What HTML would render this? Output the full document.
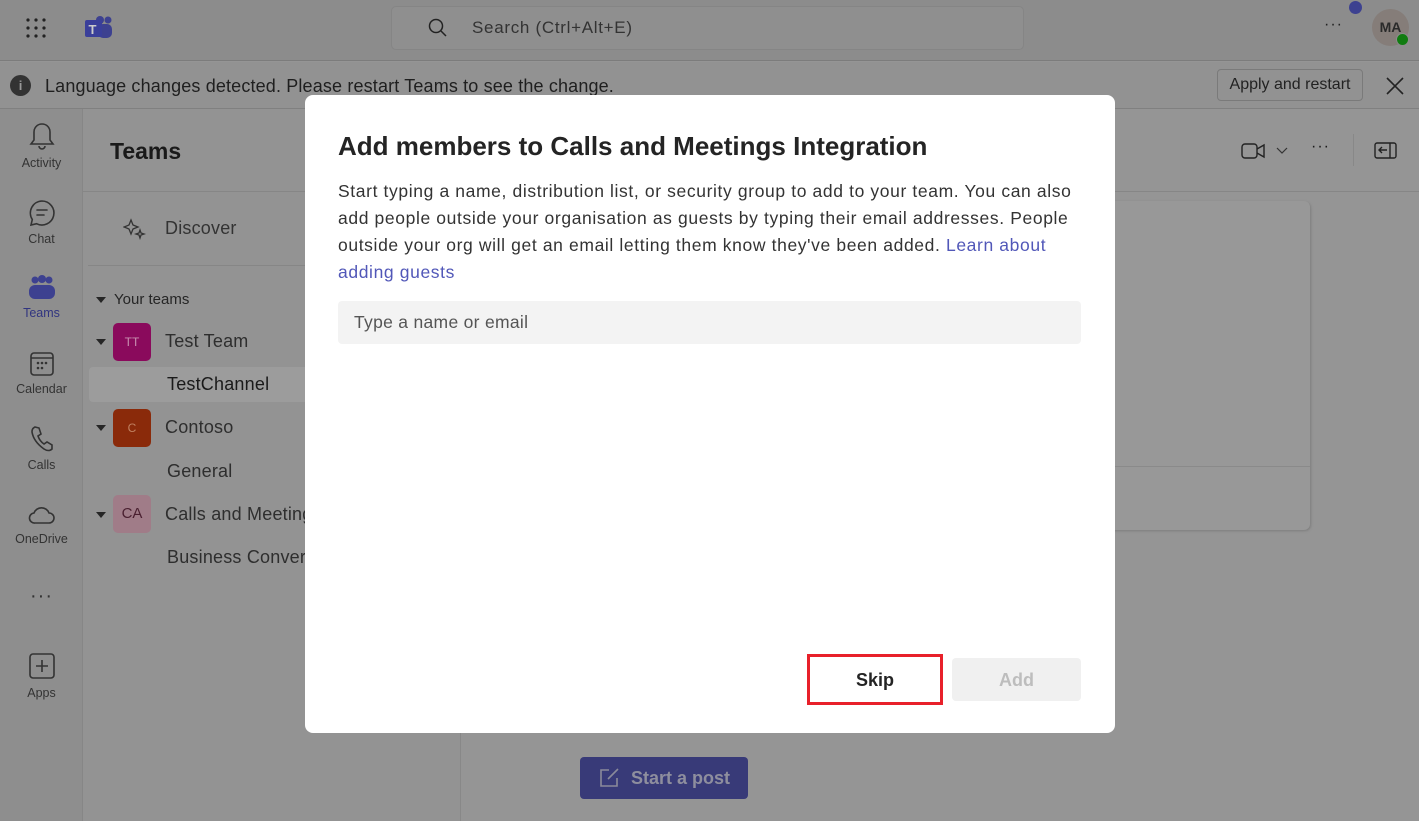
<!DOCTYPE html>
<html><head><meta charset="utf-8"><style>
*{box-sizing:border-box;margin:0;padding:0}
body{width:1419px;height:821px;overflow:hidden;position:relative;background:#959595;font-family:"Segoe UI","Liberation Sans",sans-serif;color:#1a1a1a}
.abs{position:absolute}
.top{left:0;top:0;width:1419px;height:61px;background:#8c8c8c;border-bottom:1px solid #7c7c7c}
.ban{left:0;top:62px;width:1419px;height:47px;background:#929292;border-bottom:1px solid #808080}
.rail{left:0;top:109px;width:83px;height:712px;background:#8e8e8e;border-right:1px solid #868686}
.panel{left:83px;top:109px;width:378px;height:712px;background:#939393;border-right:1px solid #888}
.ri{position:absolute;left:0;width:83px;text-align:center;font-size:12.5px;color:#333}
.ri svg{display:block;margin:0 auto 4px}
.tl{position:absolute;font-size:18px;color:#2e2e2e;letter-spacing:0.2px}
.av{position:absolute;left:113px;width:38px;height:38px;border-radius:5px;font-size:12px;text-align:center;line-height:38px}
.tri{position:absolute;left:96px;width:0;height:0;border-left:5px solid transparent;border-right:5px solid transparent;border-top:6px solid #262626}
.modal{left:305px;top:95px;width:810px;height:638px;background:#fff;border-radius:8px}
</style></head><body>
<div class="abs top"></div>
<svg class="abs" style="left:25px;top:17px" width="24" height="24"><g fill="#222"><circle cx="3" cy="3" r="1.6"/><circle cx="11" cy="3" r="1.6"/><circle cx="19" cy="3" r="1.6"/><circle cx="3" cy="11" r="1.6"/><circle cx="11" cy="11" r="1.6"/><circle cx="19" cy="11" r="1.6"/><circle cx="3" cy="19" r="1.6"/><circle cx="11" cy="19" r="1.6"/><circle cx="19" cy="19" r="1.6"/></g></svg>
<svg class="abs" style="left:84px;top:15px" width="30" height="26"><circle cx="24" cy="5" r="3.5" fill="#3d4190"/><rect x="14" y="9" width="14" height="14" rx="5" fill="#3d4190"/><circle cx="16" cy="5" r="4" fill="#3d4190"/><rect x="1" y="5" width="17" height="17" rx="2" fill="#3a3f9a"/><text x="4.5" y="19" font-size="13" font-weight="bold" fill="#ccc" font-family="Liberation Sans">T</text></svg>
<div class="abs" style="left:391px;top:6px;width:633px;height:44px;background:#8f8f8f;border:1px solid #858585;border-radius:5px"></div>
<svg class="abs" style="left:428px;top:18px" width="20" height="20"><circle cx="8" cy="8" r="6.5" stroke="#222" stroke-width="1.5" fill="none"/><path d="M13 13l5 5" stroke="#222" stroke-width="1.5"/></svg>
<div class="abs" style="left:472px;top:18px;font-size:17px;color:#333;letter-spacing:0.7px">Search (Ctrl+Alt+E)</div>
<div class="abs" style="left:1324px;top:16px;font-size:16px;color:#222;letter-spacing:1px">···</div>
<div class="abs" style="left:1349px;top:1px;width:13px;height:13px;border-radius:50%;background:#3d4190"></div>
<div class="abs" style="left:1372px;top:9px;width:37px;height:37px;border-radius:50%;background:#857d79;font-size:14px;text-align:center;line-height:37px;color:#2a2a2a;font-weight:bold">MA</div>
<div class="abs" style="left:1396px;top:33px;width:13px;height:13px;border-radius:50%;background:#107c10;border:1.5px solid #8c8c8c"></div>
<div class="abs ban"></div>
<div class="abs" style="left:10px;top:75px;width:21px;height:21px;border-radius:50%;background:#333;color:#999;font-size:13px;text-align:center;line-height:21px;font-weight:bold">i</div>
<div class="abs" style="left:45px;top:76px;font-size:18px;color:#1f1f1f;letter-spacing:0.15px">Language changes detected. Please restart Teams to see the change.</div>
<div class="abs" style="left:1217px;top:69px;width:146px;height:32px;border:1px solid #7a7a7a;border-radius:4px;font-size:16px;text-align:center;line-height:30px;color:#222">Apply and restart</div>
<svg class="abs" style="left:1386px;top:77px" width="18" height="18"><path d="M1 1l16 16M17 1L1 17" stroke="#222" stroke-width="1.6"/></svg>
<div class="abs rail"></div>
<div class="ri" style="top:122px"><svg width="26" height="30"><path d="M13 2c-5 0-8 4-8 8v8l-3 4h22l-3-4v-8c0-4-3-8-8-8zM10 24a3 3 0 0 0 6 0" stroke="#333" stroke-width="1.6" fill="none"/></svg>Activity</div>
<div class="ri" style="top:198px"><svg width="30" height="30"><path d="M15 3a12 12 0 1 1-5.5 22.7L4 27l1.3-5.5A12 12 0 0 1 15 3z M10 12h10M10 17h7" stroke="#333" stroke-width="1.6" fill="none" stroke-linecap="round"/></svg>Chat</div>
<div class="ri" style="top:274px;color:#313580"><svg width="30" height="28"><circle cx="8" cy="6" r="3.5" fill="#3d4190"/><circle cx="15" cy="5" r="4" fill="#3d4190"/><circle cx="22" cy="6" r="3.5" fill="#3d4190"/><rect x="2" y="11" width="26" height="14" rx="6" fill="#3d4190"/></svg>Teams</div>
<div class="ri" style="top:350px"><svg width="28" height="28"><rect x="3" y="3" width="22" height="22" rx="3" stroke="#333" stroke-width="1.6" fill="none"/><path d="M3 8h22" stroke="#333" stroke-width="1.6"/><g fill="#333"><circle cx="10" cy="13" r="1.3"/><circle cx="14" cy="13" r="1.3"/><circle cx="18" cy="13" r="1.3"/><circle cx="10" cy="18" r="1.3"/><circle cx="14" cy="18" r="1.3"/></g></svg>Calendar</div>
<div class="ri" style="top:424px"><svg width="28" height="30"><path d="M7 3l4 1 2 6-3 2c1 3 3 6 6 8l3-2 5 3v4c-2 2-5 2-8 0C9 20 5 14 4 8c0-3 1-4 3-5z" stroke="#333" stroke-width="1.6" fill="none"/></svg>Calls</div>
<div class="ri" style="top:504px"><svg width="30" height="24"><path d="M8 19a5 5 0 0 1-1-10 8 8 0 0 1 15 0 5 5 0 0 1 0 10z" stroke="#333" stroke-width="1.6" fill="none"/></svg>OneDrive</div>
<div class="ri" style="top:585px;font-size:20px;letter-spacing:1px">···</div>
<div class="ri" style="top:652px"><svg width="28" height="30"><rect x="2" y="2" width="24" height="24" rx="3" stroke="#333" stroke-width="1.6" fill="none"/><path d="M14 8v12M8 14h12" stroke="#333" stroke-width="1.6"/></svg>Apps</div>
<div class="abs panel"></div>
<div class="abs" style="left:83px;top:191px;width:378px;height:1px;background:#868686"></div>
<div class="abs" style="left:110px;top:138px;font-size:23px;font-weight:bold;color:#1a1a1a">Teams</div>
<svg class="abs" style="left:123px;top:218px" width="24" height="22"><path d="M8 2l2 5 5 2-5 2-2 5-2-5-5-2 5-2z M17 12l1 3 3 1-3 1-1 3-1-3-3-1 3-1z" stroke="#333" stroke-width="1.3" fill="none"/></svg>
<div class="tl" style="left:165px;top:218px;color:#333">Discover</div>
<div class="abs" style="left:88px;top:265px;width:373px;height:1px;background:#868686"></div>
<div class="tri" style="top:297px"></div>
<div class="abs" style="left:114px;top:291px;font-size:15px;color:#262626">Your teams</div>
<div class="tri" style="top:339px"></div><div class="av" style="top:323px;background:#8a0a5c;color:#c890b0">TT</div><div class="tl" style="left:165px;top:331px">Test Team</div>
<div class="abs" style="left:89px;top:367px;width:372px;height:35px;background:#9c9c9c;border-radius:4px 0 0 4px"></div>
<div class="tl" style="left:167px;top:374px;color:#1a1a1a">TestChannel</div>
<div class="tri" style="top:425px"></div><div class="av" style="top:409px;background:#8a2a0a;color:#c08060">C</div><div class="tl" style="left:165px;top:417px">Contoso</div>
<div class="tl" style="left:167px;top:461px">General</div>
<div class="tri" style="top:512px"></div><div class="av" style="top:495px;background:#a07c88;color:#4a2030;font-size:15px">CA</div><div class="tl" style="left:165px;top:504px">Calls and Meeting</div>
<div class="tl" style="left:167px;top:547px">Business Convers</div>
<div class="abs" style="left:461px;top:191px;width:958px;height:1px;background:#868686"></div>
<svg class="abs" style="left:1241px;top:142px" width="26" height="18"><rect x="1" y="2" width="15" height="14" rx="3" stroke="#222" stroke-width="1.4" fill="none"/><path d="M16 7l7-4v12l-7-4" stroke="#222" stroke-width="1.4" fill="none"/></svg>
<svg class="abs" style="left:1276px;top:147px" width="12" height="8"><path d="M1 1l5 5 5-5" stroke="#333" stroke-width="1.2" fill="none"/></svg>
<div class="abs" style="left:1311px;top:138px;font-size:16px;letter-spacing:1px">···</div>
<div class="abs" style="left:1353px;top:134px;width:1px;height:32px;background:#888"></div>
<svg class="abs" style="left:1374px;top:142px" width="24" height="18"><rect x="1" y="1" width="21" height="15" rx="2" stroke="#222" stroke-width="1.4" fill="none"/><path d="M16 1v15M13 8H5m3-3-3 3 3 3" stroke="#222" stroke-width="1.4" fill="none"/></svg>
<div class="abs" style="left:1100px;top:201px;width:210px;height:329px;background:#989898;border-radius:0 6px 6px 0;box-shadow:1px 1px 2px #7e7e7e"></div>
<div class="abs" style="left:1100px;top:466px;width:210px;height:1px;background:#8a8a8a"></div>
<div class="abs" style="left:580px;top:757px;width:168px;height:42px;background:#383a78;border-radius:4px"></div>
<svg class="abs" style="left:598px;top:767px" width="22" height="20"><path d="M11 3H3v16h16v-8M10 12l10-10" stroke="#8a8a9a" stroke-width="1.6" fill="none"/></svg>
<div class="abs" style="left:631px;top:768px;font-size:18px;font-weight:bold;color:#8e8e9e">Start a post</div>
<div class="abs modal"></div>
<div class="abs" style="left:338px;top:131px;font-size:26px;font-weight:bold;color:#242424">Add members to Calls and Meetings Integration</div>
<div class="abs" style="left:338px;top:178px;width:760px;font-size:17.5px;line-height:27px;color:#333;letter-spacing:0.62px;white-space:nowrap">Start typing a name, distribution list, or security group to add to your team. You can also<br>add people outside your organisation as guests by typing their email addresses. People<br>outside your org will get an email letting them know they've been added. <span style="color:#5157b8">Learn about</span><br><span style="color:#5157b8">adding guests</span></div>
<div class="abs" style="left:338px;top:301px;width:743px;height:43px;background:#f3f3f3;border-radius:4px;padding:0 16px;line-height:43px;font-size:17.5px;color:#555;letter-spacing:0.3px">Type a name or email</div>
<div class="abs" style="left:807px;top:654px;width:136px;height:51px;border:3px solid #e8202a;background:#fff;text-align:center;line-height:47px;font-size:18px;font-weight:bold;color:#242424">Skip</div>
<div class="abs" style="left:952px;top:658px;width:129px;height:43px;background:#f0f0f0;border-radius:4px;text-align:center;line-height:45px;font-size:18px;font-weight:bold;color:#bdbdbd">Add</div>
</body></html>
